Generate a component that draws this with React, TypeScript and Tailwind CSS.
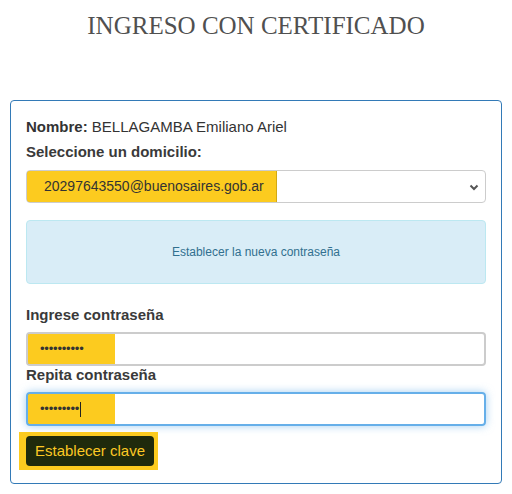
export default function App() {
  const yellow = "bg-[#fccb1f]";

  return (
    <div className="w-[512px] h-[494px] bg-white font-['Liberation_Sans',Arial,sans-serif] text-[#333]">
      <h1 className="pt-[10px] text-center font-['Liberation_Serif',Georgia,serif] text-[25px] leading-[32px] text-[#505050]">
        INGRESO CON CERTIFICADO
      </h1>

      <div className="mx-[10px] mt-[58px] rounded border border-[#337ab7] px-[15px] pt-4 pb-[13px]">
        <p className="text-[15px] leading-5">
          <b>Nombre:</b> BELLAGAMBA Emiliano Ariel
        </p>
        <p className="mt-[5px] text-[15px] leading-5 font-bold text-[#3a3a3a]">Seleccione un domicilio:</p>

        <div className="mt-2 flex h-[33px] items-stretch overflow-hidden rounded border border-[#ccc]">
          <span className={`-my-px -ml-px flex items-center rounded-l border border-[#d2a914] ${yellow} pl-[17px] pr-3 text-[14px] text-[#333]`}>
            20297643550@buenosaires.gob.ar
          </span>
          <span className="flex-1" />
          <svg className="mr-[5px] self-center" width="12" height="12" viewBox="0 0 12 12">
            <path d="M2.5 4.5 L6 8 L9.5 4.5" fill="none" stroke="#555" strokeWidth="2" />
          </svg>
        </div>

        <div className="mt-[17px] flex h-16 items-center justify-center rounded border border-[#bce8f1] bg-[#d9edf7] text-[12px] text-[#31708f]">
          Establecer la nueva contraseña
        </div>

        <p className="mt-[22px] mb-2 text-[15px] leading-[18px] font-bold text-[#3a3a3a]">Ingrese contraseña</p>
        <div className="flex h-[34px] items-stretch overflow-hidden rounded border-2 border-[#ccc]">
          <span className={`-my-[2px] -ml-[2px] flex w-[89px] items-center rounded-l border-2 border-r-0 border-[#d4ab16] ${yellow} pl-[12px] text-[13px] tracking-[-0.2px] text-[#333]`}>
            ••••••••••
          </span>
        </div>

        <p className="mb-2 text-[15px] leading-[18px] font-bold text-[#3a3a3a]">Repita contraseña</p>
        <div className="flex h-[34px] items-stretch overflow-hidden rounded border-2 border-[#66afe9] shadow-[0_0_8px_rgba(102,175,233,0.6)]">
          <span className={`-my-[2px] -ml-[2px] flex w-[89px] items-center rounded-l border-2 border-r-0 border-[#8aa03a] ${yellow} pl-[12px] text-[13px] tracking-[-0.2px] text-[#333]`}>
            •••••••••
            <span className="ml-[1px] inline-block h-[15px] w-px bg-[#222]" />
          </span>
        </div>

        <div className={`-ml-[7px] mt-[6px] inline-block ${yellow} py-1 pl-[7px] pr-1`}>
          <button className="block h-[30px] w-[128px] rounded bg-[#1f2a0c] text-[15px] text-[#fcc824]">
            Establecer clave
          </button>
        </div>
      </div>
    </div>
  );
}
